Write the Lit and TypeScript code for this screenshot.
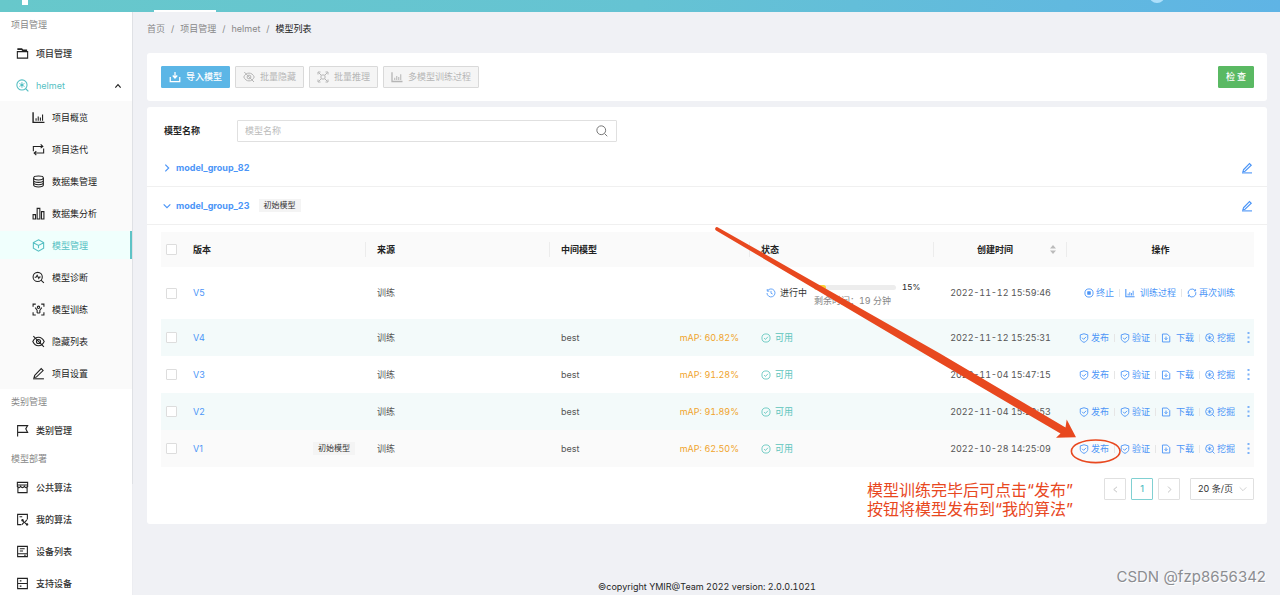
import { LitElement, html, css, svg, nothing } from "lit";
import { customElement, property, state } from "lit/decorators.js";
import { classMap } from "lit/directives/class-map.js";
import { styleMap } from "lit/directives/style-map.js";

const ICONS: Record<string, unknown> = {
  folder: svg`<path d="M2.5 8.5h19v12h-19z"/><path d="M2.5 4h8l2 2h8" stroke-width="3"/>`,
  helmet: svg`<circle cx="11" cy="11" r="9.4"/><path d="M18 18l4.800 4.800"/><path d="M11 5.500v11M6.200 8.200l9.600 5.600M15.800 8.200l-9.600 5.600" stroke-width="1.500"/><circle cx="11" cy="11" r="1.300" fill="currentColor"/>`,
  chart: svg`<path d="M2 2.500v18.500h21" stroke-width="2.600"/><path d="M7.500 18v-4.500M11.500 18v-8M15.500 18v-6M19.500 18V6.500"/>`,
  loop: svg`<path d="M2.500 15V6.500h17M16 2.500l4 4-4 3M21.500 10v8.500h-17M8 15l-4 3.500 4 4"/>`,
  database: svg`<ellipse cx="12" cy="5.500" rx="9" ry="3.600"/><path d="M3 5.500v13c0 2 4 3.600 9 3.600s9-1.600 9-3.600v-13M3 10c0 2 4 3.600 9 3.600s9-1.600 9-3.600M3 14.500c0 2 4 3.600 9 3.600s9-1.600 9-3.600"/>`,
  bars: svg`<path d="M2 14h4.500v8H2zM9.500 2.500h5V22h-5zM17.500 8.500H22V22h-4.500z"/>`,
  cube: svg`<path d="M12 1.500l9.500 5v10.500L12 22.500 2.500 17V6.500zM2.500 6.800L12 12l9.500-5.200M12 12v5"/>`,
  diagnose: svg`<circle cx="10.500" cy="11" r="8.500"/><path d="M16.500 17l5.500 5M5 11.500h2.500L9.500 8l3 5.500 1.500-2.500h2"/>`,
  train: svg`<path d="M2 7V2h5M17 2h5v5M22 17v5h-5M7 22H2v-5"/><path d="M9.500 18.500v-5L6 8.500M14.500 18.500v-5L18 8.500M9.500 18.500h5"/><circle cx="12" cy="8" r="2.200"/>`,
  infer: svg`<path d="M2 7V2h5M17 2h5v5M22 17v5h-5M7 22H2v-5M3 3l5 5M21 3l-5 5M3 21l5-5M21 21l-5-5"/><rect x="8" y="8" width="8" height="8" rx="2"/>`,
  hidden: svg`<path d="M1.500 12c2.500-5.300 6-7.800 10.500-7.800s8 2.500 10.500 7.800c-2.500 5.300-6 7.800-10.500 7.800S4 17.300 1.500 12z"/><circle cx="12" cy="12" r="3.800"/><path d="M2.500 2l19.500 20"/>`,
  pencil: svg`<path d="M5 15.500L17 3l3.500 3.500L8 18.500l-4.200 1z"/><path d="M2 21.800h20"/>`,
  flag: svg`<path d="M3 23V3h18.500l-3.500 6 3.500 6.500H3"/>`,
  store: svg`<path d="M2.500 2.500h19v5h-19zM3.500 9v12.500h17V9M2.500 7.500v3c2 2.500 4 2.500 6-.5 2 3 5 3 7 0 2 3 4 3 6 .5v-3"/>`,
  mine: svg`<path d="M10 21.500H3v-19h18V12M6.500 7h5"/><path d="M11 12.500l9.500 9.500M20 12.500l-3 4M11 21.500l3.500-4"/><circle cx="12" cy="13.500" r="1.200"/><circle cx="20.500" cy="21" r="1.200"/>`,
  device: svg`<path d="M3 2.500h18v19H3zM7 7h9M7 11h6M3 16h18M15 18.800h3"/>`,
  support: svg`<path d="M3 2.500h18v19H3zM3 12h18M7 7.200h3M7 16.800h3"/>`,
  up: svg`<path d="M4 17l8-9 8 9"/>`,
  down: svg`<path d="M2 7l10 10L22 7"/>`,
  right: svg`<path d="M7 2l10 10L7 22"/>`,
  left: svg`<path d="M17 3L6 12l11 9"/>`,
  import: svg`<path d="M12 2v11M7.500 9l4.500 5 4.500-5M2.500 12v9h19v-9"/>`,
  search: svg`<circle cx="10.500" cy="10.500" r="8.800"/><path d="M17 17l5.500 5.500"/>`,
  history: svg`<path d="M4 6.500A9.600 9.600 0 1 1 2.400 12M3 2.500v5h5M12 7v5.500l4 2"/>`,
  check: svg`<circle cx="12" cy="12" r="9.800"/><path d="M7.500 12l3.200 3.500 6-6.500"/>`,
  stop: svg`<circle cx="12" cy="12" r="9.800"/><rect x="9" y="9" width="6" height="6" fill="currentColor"/>`,
  refresh: svg`<path d="M2.800 14A9.500 9.500 0 0 1 19.500 6M21.200 10A9.500 9.500 0 0 1 4.500 18M20.500 3V7H17M3.500 21V17H7"/>`,
  shield: svg`<path d="M12 1.800l9 2.700v8.500c0 4-4 7.500-9 9.500-5-2-9-5.500-9-9.500V4.500zM7.500 11.500l3.500 3.700 6-6"/>`,
  download: svg`<path d="M3.500 2.500h11.500l6 6v13H3.500zM12 8.500v7M8.500 12.500l3.500 3.700 3.500-3.700"/>`,
};

@customElement("ui-icon")
class UiIcon extends LitElement {
  @property() name = "";
  @property({ type: Number }) weight = 2;
  static styles = css`
    :host { display: inline-flex; flex: none; width: 12px; height: 12px; }
    svg { width: 100%; height: 100%; display: block; }
  `;
  render() {
    return html`<svg viewBox="0 0 24 24" fill="none" stroke="currentColor" stroke-width=${this.weight} aria-hidden="true">${ICONS[this.name] ?? nothing}</svg>`;
  }
}

interface NavItem { icon: string; label: string }
const PROJECT_NAV: NavItem[] = [
  { icon: "chart", label: "项目概览" },
  { icon: "loop", label: "项目迭代" },
  { icon: "database", label: "数据集管理" },
  { icon: "bars", label: "数据集分析" },
  { icon: "cube", label: "模型管理" },
  { icon: "diagnose", label: "模型诊断" },
  { icon: "train", label: "模型训练" },
  { icon: "hidden", label: "隐藏列表" },
  { icon: "pencil", label: "项目设置" },
];
const DEPLOY_NAV: NavItem[] = [
  { icon: "store", label: "公共算法" },
  { icon: "mine", label: "我的算法" },
  { icon: "device", label: "设备列表" },
  { icon: "support", label: "支持设备" },
];

@customElement("side-nav")
class SideNav extends LitElement {
  @state() private current = "模型管理";
  static styles = css`
    :host { display: block; position: relative; background: #fff; border-right: 1px solid #ecedf1; }
    :host::after { content: ""; position: absolute; top: 0; right: -1px; width: 1px; height: 81%; background: #dfe1e5; }
    nav { display: flex; flex-direction: column; }
    .title { height: 25px; line-height: 25px; padding-left: 11px; color: #888; }
    .item { display: flex; align-items: center; gap: 8px; height: 32px; box-sizing: border-box; padding: 1px 10px 0 16px; color: #333; text-decoration: none; font-weight: 500; }
    .item ui-icon { width: 13px; height: 13px; color: #222; }
    .item > span { margin-left: -1px; }
    .item.open { color: #55bfc3; font-weight: 400; }
    .item.open ui-icon, .sub .item.active ui-icon { color: inherit; }
    .item.open ui-icon.arrow { margin-left: auto; color: #222; width: 8px; height: 8px; }
    .sub { background: #fafafa; }
    .sub .item { padding-left: 32px; color: #222; font-weight: 400; }
    .sub .item.active { color: #55bfc3; background: #f0fffd; border-right: 2px solid #5ec3c6; height: 28px; margin: 2px 0; padding-right: 8px; }
  `;
  private link(i: NavItem) {
    return html`<a href="#" class=${classMap({ item: true, active: i.label === this.current })}
      @click=${(e: Event) => { e.preventDefault(); this.current = i.label; }}>
      <ui-icon name=${i.icon}></ui-icon><span>${i.label}</span></a>`;
  }
  render() {
    return html`<nav>
      <div class="title">项目管理</div>
      ${this.link({ icon: "folder", label: "项目管理" })}
      <a href="#" class="item open"><ui-icon name="helmet"></ui-icon><span>helmet</span><ui-icon class="arrow" name="up" weight="3.500"></ui-icon></a>
      <div class="sub">${PROJECT_NAV.map((i) => this.link(i))}</div>
      <div class="title">类别管理</div>
      ${this.link({ icon: "flag", label: "类别管理" })}
      <div class="title">模型部署</div>
      ${DEPLOY_NAV.map((i) => this.link(i))}
    </nav>`;
  }
}

interface ModelRow { v: string; map?: string; time: string; initial?: boolean; running?: number; left?: string }
const ROWS: ModelRow[] = [
  { v: "V5", time: "2022-11-12 15:59:46", running: 15, left: "剩余时间：19 分钟" },
  { v: "V4", map: "60.82%", time: "2022-11-12 15:25:31" },
  { v: "V3", map: "91.28%", time: "2022-11-04 15:47:15" },
  { v: "V2", map: "91.89%", time: "2022-11-04 15:29:53" },
  { v: "V1", map: "62.50%", time: "2022-10-28 14:25:09", initial: true },
];

@customElement("model-table")
class ModelTable extends LitElement {
  static styles = css`
    :host { display: block; }
    table { width: 100%; table-layout: fixed; border-collapse: collapse; color: #555; }
    .c-check { width: 21px; } .c-stage { width: 200px; } .c-time { width: 133px; } .c-ops { width: 187px; }
    th { height: 35px; padding: 0 11px; text-align: left; font-weight: 600; color: #222; background: #fafafa; position: relative; }
    th.line::after { content: ""; position: absolute; right: 0; top: 10px; bottom: 10px; width: 1px; background: #ececec; }
    td { height: 37px; padding: 0 11px; }
    .running td { height: 52px; }
    .even td { background: #f3fafa; }
    .last td { background: #fafafa; }
    th.check, td.check { padding: 0 0 0 5px; }
    input { appearance: none; display: block; width: 11px; height: 11px; margin: 0; border: 1px solid #ddd; border-radius: 1px; background: #fff; }
    input:checked { background: #55bfc3; }
    a { color: #4b95f7; text-decoration: none; }
    .split { display: flex; align-items: center; justify-content: space-between; }
    .tag { padding: 0 5px; height: 13px; line-height: 13px; font-size: 8px; background: #f4f4f4; color: #333; }
    .map { color: #f0a42c; font-variant-numeric: tabular-nums; }
    .center { text-align: center; }
    .time { font-variant-numeric: tabular-nums; white-space: nowrap; text-align: center; padding: 0; }
    th.sorted { padding-right: 22px; }
    .sort { position: absolute; right: 11px; top: 13px; width: 6px; height: 9px; fill: #bbb; }
    .ok { display: flex; align-items: center; gap: 4px; color: #5cc4bc; }
    .ok ui-icon, .run ui-icon { width: 10px; height: 10px; }
    .run { display: flex; align-items: center; gap: 4px; padding-left: 5px; white-space: nowrap; color: #333; }
    .run ui-icon { color: #4b95f7; }
    .info { padding: 2px 0 0 3px; color: #888; line-height: 13px; font-variant-numeric: tabular-nums; }
    .bar { display: flex; align-items: center; gap: 6px; color: #333; font-size: 8px; font-weight: 500; }
    .track { width: 82px; height: 5px; border-radius: 3px; background: #ededed; overflow: hidden; }
    .fill { height: 100%; background: #fbd139; border-radius: 3px; }
    .ops { display: flex; align-items: center; white-space: nowrap; }
    .ops.mid { justify-content: center; padding-right: 10px; }
    .op { display: flex; align-items: center; gap: 2px; }
    .op.wide { gap: 5px; }
    .op ui-icon { width: 10px; height: 10px; }
    .op + .op::before { content: ""; width: 1px; height: 8px; margin: 0 3px 0 5px; background: #e6e6e6; }
    .op + .op.wide::before { margin-right: 0; }
    td.act { padding: 0 4px 0 12px; }
    .more { display: flex; margin-left: auto; padding: 0; border: 0; background: none; }
    .more svg { width: 3px; height: 11px; fill: #7db2f8; }
  `;
  private op(icon: string, label: string, wide = false) {
    return html`<a href="#" class=${classMap({ op: true, wide })}><ui-icon name=${icon} weight="2.200"></ui-icon>${label}</a>`;
  }
  private row(r: ModelRow, i: number) {
    const cls = { running: !!r.running, even: i % 2 === 1, last: i === ROWS.length - 1 };
    return html`<tr class=${classMap(cls)}>
      <td class="check"><input type="checkbox" aria-label=${"选择 " + r.v} /></td>
      <td><div class="split"><a href="#">${r.v}</a>${r.initial ? html`<span class="tag">初始模型</span>` : nothing}</div></td>
      <td>训练</td>
      <td>${r.map ? html`<div class="split"><span>best</span><span class="map">mAP: ${r.map}</span></div>` : nothing}</td>
      <td>${r.running
        ? html`<div class="run"><ui-icon name="history"></ui-icon>进行中
            <div class="info"><div class="bar"><div class="track"><div class="fill" style=${styleMap({ width: r.running + "%" })}></div></div>${r.running}%</div>${r.left}</div></div>`
        : html`<div class="ok"><ui-icon name="check"></ui-icon>可用</div>`}</td>
      <td class="time">${r.time}</td>
      <td class="act">${r.running
        ? html`<div class="ops mid">${this.op("stop", "终止")}${this.op("chart", "训练过程", true)}${this.op("refresh", "再次训练")}</div>`
        : html`<div class="ops">${this.op("shield", "发布")}${this.op("shield", "验证")}${this.op("download", "下载", true)}${this.op("helmet", "挖掘")}
            <button class="more" aria-label="更多"><svg viewBox="0 0 3 11"><path d="M.5 0h2v2h-2zM.5 4.500h2v2h-2zM.5 9h2v2h-2z"/></svg></button></div>`}</td>
    </tr>`;
  }
  render() {
    return html`<table>
      <colgroup><col class="c-check" /><col /><col /><col class="c-stage" /><col /><col class="c-time" /><col class="c-ops" /></colgroup>
      <thead><tr>
        <th class="check"><input type="checkbox" aria-label="全选" /></th>
        <th class="line">版本</th><th class="line">来源</th><th class="line">中间模型</th><th class="line">状态</th>
        <th class="line sorted"><div class="center">创建时间</div><svg class="sort" viewBox="0 0 6 9"><path d="M3 0l3 3.500H0zM3 9l3-3.500H0z"/></svg></th>
        <th><div class="center">操作</div></th>
      </tr></thead>
      <tbody>${ROWS.map((r, i) => this.row(r, i))}</tbody>
    </table>`;
  }
}

@customElement("app-root")
class AppRoot extends LitElement {
  static styles = css`
    :host { display: grid; grid-template: auto minmax(0, 1fr) / 133px 1fr; height: 100vh; overflow: hidden; background: #f0f1f5;
      font-family: Inter, "Noto Sans CJK SC", sans-serif; font-size: 9px; line-height: 14px; color: #262626; box-sizing: border-box; }
    * { box-sizing: border-box; }
    button, input, select { font: inherit; }
    header { grid-column: 1 / -1; display: flex; height: 12px; padding: 0 115px 0 22px; overflow: hidden; background: linear-gradient(90deg, #67c8cb, #65c3d3 50%, #5fb4e5); }
    .logo { width: 6px; height: 5px; background: #fff; }
    .tab { width: 62px; height: 2px; margin: 10px auto 0 126px; background: #fff; }
    .avatar { width: 16px; height: 16px; margin-top: -13px; border-radius: 50%; background: #aee0fb; }
    main { position: relative; display: flex; flex-direction: column; min-width: 0; padding: 10px 13px 0 14px; }
    .crumbs { display: flex; gap: 6px; color: #888; }
    .crumbs a { color: inherit; text-decoration: none; }
    .crumbs .here { color: #222; }
    .card { background: #fff; border-radius: 3px; }
    .tools { display: flex; gap: 5px; margin-top: 17px; padding: 13px 13px 13px 14px; height: 48px; }
    .btn { display: flex; align-items: center; gap: 5px; height: 22px; padding: 0 7px; border: 1px solid #d9d9d9; border-radius: 1px; background: #f5f5f5; color: #b5b5b5; white-space: nowrap; }
    .btn.primary { background: #5cb6e6; border-color: #5cb6e6; color: #fff; font-weight: 500; }
    .btn.check { margin-left: auto; gap: 2px; background: #5ab963; border-color: #5ab963; color: #fff; font-weight: 500; }
    .list { margin-top: 6px; padding-bottom: 24px; }
    .filter { display: flex; align-items: center; padding: 13px 17px 7px; }
    .filter label { width: 73px; font-weight: 600; }
    .search { display: flex; align-items: center; width: 380px; height: 22px; padding: 0 8px 0 7px; border: 1px solid #e0e0e0; border-radius: 1px; }
    .search input { flex: 1; min-width: 0; padding: 0; border: 0; outline: 0; background: none; }
    .search input::placeholder { color: #bbb; }
    .search ui-icon { color: #777; }
    .group { display: flex; align-items: center; height: 38px; padding: 0 14px 0 16px; border-bottom: 1px solid #f0f0f0; color: #4b95f7; font-weight: 700; font-variant-numeric: tabular-nums; }
    .toggle { display: flex; align-items: center; gap: 5px; padding: 0; border: 0; background: none; color: inherit; }
    .toggle ui-icon { width: 8px; height: 8px; }
    .tag { margin-left: 9px; padding: 0 5px; height: 13px; line-height: 13px; font-size: 8px; font-weight: 400; background: #f4f4f4; color: #333; }
    .edit { display: flex; margin-left: auto; padding: 0; border: 0; background: none; color: #4b95f7; }
    model-table { padding: 7px 13px 0 14px; }
    .pager { display: flex; justify-content: flex-end; gap: 5px; padding: 11px 13px 0; }
    .page { display: flex; align-items: center; justify-content: center; width: 22px; height: 22px; padding: 0; border: 1px solid #e0e0e0; border-radius: 1px; background: #fff; color: #bbb; }
    .page ui-icon { width: 7px; height: 7px; }
    .page.on { border-color: #80d0d2; color: #55bfc3; font-weight: 500; }
    .size { position: relative; margin-left: 5px; }
    .size select { appearance: none; width: 64px; height: 22px; padding: 0 7px; border: 1px solid #e0e0e0; border-radius: 1px; background: #fff; color: #333; }
    .size ui-icon { position: absolute; right: 7px; top: 7px; width: 8px; height: 8px; color: #bbb; pointer-events: none; }
    footer { margin-top: auto; padding-bottom: 1px; text-align: center; font-variant-numeric: tabular-nums; }
    .marks { position: absolute; top: 0; right: 0; width: 1147px; height: 583px; pointer-events: none; }
    .note { position: absolute; top: 469px; right: 200px; width: 213px; margin: 0; font-size: 16px; line-height: 19px; color: #e8481f; white-space: nowrap; }
    .brand { position: absolute; right: 14px; bottom: 8px; font-size: 15px; line-height: 20px; color: #8c8d91; text-shadow: 1px 1px 0 #fff; }
  `;
  render() {
    return html`
      <header><div class="logo"></div><div class="tab"></div><div class="avatar"></div></header>
      <side-nav></side-nav>
      <main>
        <div class="crumbs"><a href="#">首页</a><span>/</span><a href="#">项目管理</a><span>/</span><a href="#">helmet</a><span>/</span><span class="here">模型列表</span></div>
        <section class="card tools">
          <button class="btn primary"><ui-icon name="import" weight="2.500"></ui-icon>导入模型</button>
          <button class="btn" disabled><ui-icon name="hidden"></ui-icon>批量隐藏</button>
          <button class="btn" disabled><ui-icon name="infer"></ui-icon>批量推理</button>
          <button class="btn" disabled><ui-icon name="chart"></ui-icon>多模型训练过程</button>
          <button class="btn check"><span>检</span><span>查</span></button>
        </section>
        <section class="card list">
          <div class="filter"><label for="name">模型名称</label>
            <div class="search"><input id="name" type="text" placeholder="模型名称" /><ui-icon name="search"></ui-icon></div></div>
          <div class="group"><button class="toggle"><ui-icon name="right" weight="3.500"></ui-icon>model_group_82</button>
            <button class="edit" aria-label="编辑"><ui-icon name="pencil" weight="2.200"></ui-icon></button></div>
          <div class="group"><button class="toggle"><ui-icon name="down" weight="3.500"></ui-icon>model_group_23</button><span class="tag">初始模型</span>
            <button class="edit" aria-label="编辑"><ui-icon name="pencil" weight="2.200"></ui-icon></button></div>
          <model-table></model-table>
          <div class="pager">
            <button class="page" aria-label="上一页"><ui-icon name="left" weight="3"></ui-icon></button>
            <button class="page on">1</button>
            <button class="page" aria-label="下一页"><ui-icon name="right" weight="3"></ui-icon></button>
            <div class="size"><select aria-label="每页条数"><option>20 条/页</option></select><ui-icon name="down"></ui-icon></div>
          </div>
        </section>
        <footer>©copyright YMIR@Team 2022 version: 2.0.0.1021</footer>
        <svg class="marks" viewBox="133 12 1147 583">
          <path fill="#e8481f" d="M717.600 227.200L940 353.500 1065.500 427.500 1066.700 419.500 1076 437.300 1056 437.700 1060.500 433.500 940 363 716 230.400A1.800 1.800 0 0 1 717.600 227.200z"/>
          <ellipse cx="1095.700" cy="451.300" rx="24.300" ry="11.300" fill="none" stroke="#e8481f" stroke-width="1.600"/>
        </svg>
        <p class="note">模型训练完毕后可点击“发布”<br />按钮将模型发布到“我的算法”</p>
        <div class="brand">CSDN @fzp8656342</div>
      </main>`;
  }
}
